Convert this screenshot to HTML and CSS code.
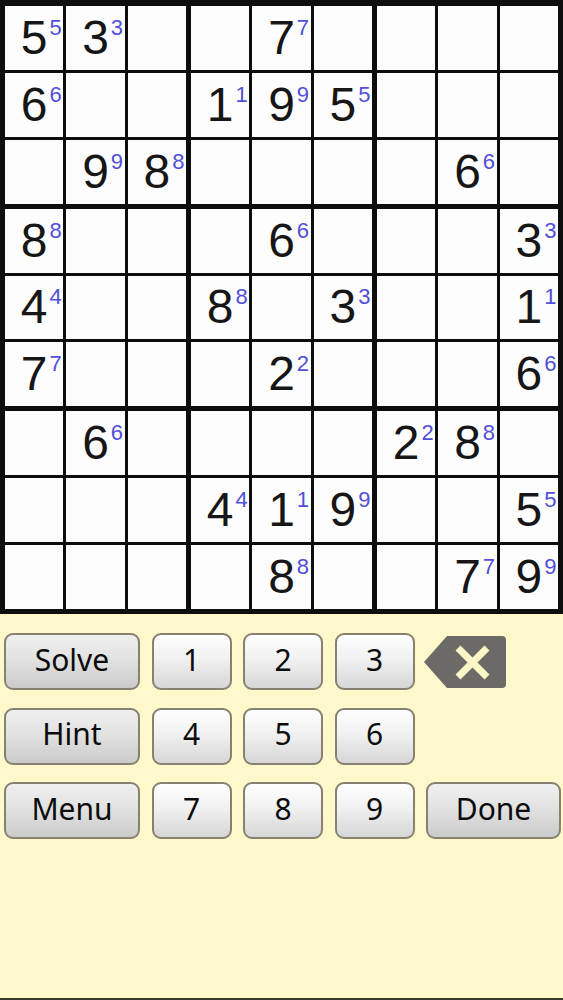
FILE: index.html
```html
<!DOCTYPE html>
<html>
<head>
<meta charset="utf-8">
<link rel="stylesheet" href="styles.css">
</head>
<body>
<div class="screen">
  <div class="board">
    <div class="box">
      <div class="cell"><span class="n">5<sup class="hint">5</sup></span></div>
      <div class="cell"><span class="n">3<sup class="hint">3</sup></span></div>
      <div class="cell"></div>
      <div class="cell"><span class="n">6<sup class="hint">6</sup></span></div>
      <div class="cell"></div>
      <div class="cell"></div>
      <div class="cell"></div>
      <div class="cell"><span class="n">9<sup class="hint">9</sup></span></div>
      <div class="cell"><span class="n">8<sup class="hint">8</sup></span></div>
    </div>
    <div class="box">
      <div class="cell"></div>
      <div class="cell"><span class="n">7<sup class="hint">7</sup></span></div>
      <div class="cell"></div>
      <div class="cell"><span class="n">1<sup class="hint">1</sup></span></div>
      <div class="cell"><span class="n">9<sup class="hint">9</sup></span></div>
      <div class="cell"><span class="n">5<sup class="hint">5</sup></span></div>
      <div class="cell"></div>
      <div class="cell"></div>
      <div class="cell"></div>
    </div>
    <div class="box">
      <div class="cell"></div>
      <div class="cell"></div>
      <div class="cell"></div>
      <div class="cell"></div>
      <div class="cell"></div>
      <div class="cell"></div>
      <div class="cell"></div>
      <div class="cell"><span class="n">6<sup class="hint">6</sup></span></div>
      <div class="cell"></div>
    </div>
    <div class="box">
      <div class="cell"><span class="n">8<sup class="hint">8</sup></span></div>
      <div class="cell"></div>
      <div class="cell"></div>
      <div class="cell"><span class="n">4<sup class="hint">4</sup></span></div>
      <div class="cell"></div>
      <div class="cell"></div>
      <div class="cell"><span class="n">7<sup class="hint">7</sup></span></div>
      <div class="cell"></div>
      <div class="cell"></div>
    </div>
    <div class="box">
      <div class="cell"></div>
      <div class="cell"><span class="n">6<sup class="hint">6</sup></span></div>
      <div class="cell"></div>
      <div class="cell"><span class="n">8<sup class="hint">8</sup></span></div>
      <div class="cell"></div>
      <div class="cell"><span class="n">3<sup class="hint">3</sup></span></div>
      <div class="cell"></div>
      <div class="cell"><span class="n">2<sup class="hint">2</sup></span></div>
      <div class="cell"></div>
    </div>
    <div class="box">
      <div class="cell"></div>
      <div class="cell"></div>
      <div class="cell"><span class="n">3<sup class="hint">3</sup></span></div>
      <div class="cell"></div>
      <div class="cell"></div>
      <div class="cell"><span class="n">1<sup class="hint">1</sup></span></div>
      <div class="cell"></div>
      <div class="cell"></div>
      <div class="cell"><span class="n">6<sup class="hint">6</sup></span></div>
    </div>
    <div class="box">
      <div class="cell"></div>
      <div class="cell"><span class="n">6<sup class="hint">6</sup></span></div>
      <div class="cell"></div>
      <div class="cell"></div>
      <div class="cell"></div>
      <div class="cell"></div>
      <div class="cell"></div>
      <div class="cell"></div>
      <div class="cell"></div>
    </div>
    <div class="box">
      <div class="cell"></div>
      <div class="cell"></div>
      <div class="cell"></div>
      <div class="cell"><span class="n">4<sup class="hint">4</sup></span></div>
      <div class="cell"><span class="n">1<sup class="hint">1</sup></span></div>
      <div class="cell"><span class="n">9<sup class="hint">9</sup></span></div>
      <div class="cell"></div>
      <div class="cell"><span class="n">8<sup class="hint">8</sup></span></div>
      <div class="cell"></div>
    </div>
    <div class="box">
      <div class="cell"><span class="n">2<sup class="hint">2</sup></span></div>
      <div class="cell"><span class="n">8<sup class="hint">8</sup></span></div>
      <div class="cell"></div>
      <div class="cell"></div>
      <div class="cell"></div>
      <div class="cell"><span class="n">5<sup class="hint">5</sup></span></div>
      <div class="cell"></div>
      <div class="cell"><span class="n">7<sup class="hint">7</sup></span></div>
      <div class="cell"><span class="n">9<sup class="hint">9</sup></span></div>
    </div>
  </div>

  <div class="keypad">
    <button class="btn action">Solve</button>
    <button class="btn">1</button>
    <button class="btn">2</button>
    <button class="btn">3</button>
    <div class="backspace">
      <svg width="82" height="52" viewBox="0 0 82 52">
        <path d="M23 0 H78 Q82 0 82 4 V48 Q82 52 78 52 H23 L0 26 Z" fill="#6b6a66"/>
        <path d="M34 12 L63 41 M63 12 L34 41" stroke="#fdf6c6" stroke-width="7" fill="none"/>
      </svg>
    </div>

    <button class="btn action">Hint</button>
    <button class="btn">4</button>
    <button class="btn">5</button>
    <button class="btn">6</button>
    <div class="spacer"></div>

    <button class="btn action">Menu</button>
    <button class="btn">7</button>
    <button class="btn">8</button>
    <button class="btn">9</button>
    <button class="btn action">Done</button>
  </div>
</div>
</body>
</html>
```

FILE: styles.css
```css
html, body {
  margin: 0;
  padding: 0;
}

body {
  background: #fef8cb;
}

.screen {
  height: 1000px;
  box-sizing: border-box;
  border-bottom: 2px solid #3b3a30;
  background: #fef8cb;
}

.board {
  height: 614px;
  box-sizing: border-box;
  padding: 6px 5px 5px 5px;
  background: #0e0e0e;
  display: grid;
  grid-template-columns: repeat(3, 1fr);
  grid-template-rows: repeat(3, 1fr);
  gap: 5px;
}

.box {
  display: grid;
  grid-template-columns: repeat(3, 1fr);
  grid-template-rows: repeat(3, 1fr);
  gap: 3px;
}

.cell {
  background: #fdfdfd;
  display: flex;
  align-items: center;
  justify-content: center;
}

.n {
  position: relative;
  font-family: "Liberation Sans", Arial, sans-serif;
  font-size: 48px;
  line-height: 1;
  color: #161616;
}

.hint {
  position: absolute;
  left: calc(100% + 2px);
  top: 3px;
  font-family: "Liberation Sans", Arial, sans-serif;
  font-size: 22px;
  line-height: 1;
  color: #5050d8;
  vertical-align: baseline;
}

.keypad {
  display: grid;
  grid-template-columns: 136px 80px 80px 80px 135px;
  grid-auto-rows: 57px;
  column-gap: 11.5px;
  row-gap: 17.5px;
  padding: 19px 0 0 4px;
}

.btn {
  margin: 0;
  padding: 0 0 5px 0;
  border: 2px solid #868170;
  border-radius: 9px;
  background: linear-gradient(#fefefe, #f1f1f1 45%, #d6d6d6);
  font-family: "Noto Sans", "DejaVu Sans", sans-serif;
  font-size: 30px;
  color: #0c0c0c;
  display: flex;
  align-items: center;
  justify-content: center;
}

.btn.action {
  background: linear-gradient(#efefef, #e2e2e2 45%, #cbcbcb);
}

.backspace {
  align-self: center;
  justify-self: start;
  margin-left: -2px;
  display: flex;
}
```
